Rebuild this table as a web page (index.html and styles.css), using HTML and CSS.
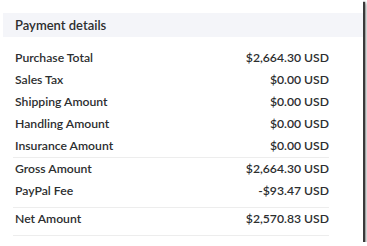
FILE: index.html
```html
<!DOCTYPE html>
<html>
<head>
<meta charset="utf-8">
<link rel="stylesheet" href="styles.css">
</head>
<body>
<div class="frame">
  <div class="header">Payment details</div>
  <div class="group first">
    <div class="row"><span>Purchase Total</span><span>$2,664.30 USD</span></div>
    <div class="row"><span>Sales Tax</span><span>$0.00 USD</span></div>
    <div class="row"><span>Shipping Amount</span><span>$0.00 USD</span></div>
    <div class="row"><span>Handling Amount</span><span>$0.00 USD</span></div>
    <div class="row"><span>Insurance Amount</span><span>$0.00 USD</span></div>
  </div>
  <div class="group">
    <div class="row"><span>Gross Amount</span><span>$2,664.30 USD</span></div>
    <div class="row"><span>PayPal Fee</span><span>-$93.47 USD</span></div>
  </div>
  <div class="group">
    <div class="row"><span>Net Amount</span><span>$2,570.83 USD</span></div>
  </div>
</div>
</body>
</html>
```

FILE: styles.css
```css
html, body {
  margin: 0;
  padding: 0;
  background: #ffffff;
}
body {
  font-family: Lato, "Liberation Sans", sans-serif;
  color: #2c2e2f;
}
.frame {
  width: 363px;
  height: 242px;
  background: #fff;
  box-shadow: 2px 2px 1px #3a3a3a, 3px 3px 3px rgba(0,0,0,0.45);
  box-sizing: border-box;
  padding-top: 13px;
}
.header {
  margin-left: 3px;
  height: 24px;
  line-height: 25px;
  background: #f4f5f9;
  padding-left: 12px;
  font-size: 13px;
  font-weight: 600;
}
.group {
  margin: 0 34px 0 13px;
  border-bottom: 1px solid #ededed;
  padding-bottom: 5px;
}
.group.first {
  margin-top: 10px;
  padding-bottom: 0;
}
.row {
  display: flex;
  justify-content: space-between;
  height: 22px;
  line-height: 22px;
  padding-left: 2px;
  font-size: 12.2px;
  font-weight: 600;
}
```
